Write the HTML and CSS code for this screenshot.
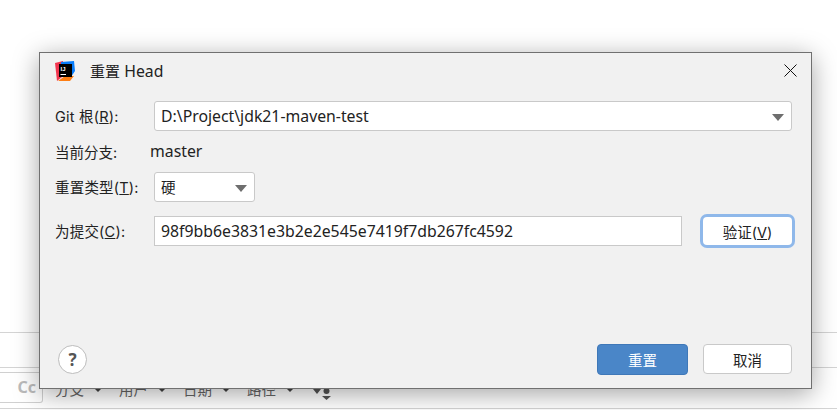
FILE: index.html
```html
<!DOCTYPE html>
<html lang="zh">
<head>
<meta charset="utf-8">
<title>重置 Head</title>
<link rel="stylesheet" href="styles.css">
</head>
<body>
<div class="page">
  <div class="top"></div>
  <div class="strip"></div>
  <div class="filters">
    <div class="search">Cc</div>
    <div class="filter">分支<i></i></div>
    <div class="filter">用户<i></i></div>
    <div class="filter">日期<i></i></div>
    <div class="filter">路径<i></i></div>
    <svg class="sort" width="18" height="20" viewBox="0 0 18 20"><path d="M0 9h8l-4 5zM3.500 0h1v9h-1z" fill="#555"/><circle cx="13.500" cy="11" r="3" fill="#555"/><path d="M9 16h9l-4.500 4z" fill="#555"/><path d="M13 0h1v9h-1z" fill="#555"/></svg>
  </div>
</div>
<div class="dialog">
  <div class="titlebar">
    <svg class="logo" width="20" height="20" viewBox="0 0 20 20">
      <path d="M0 2 8 0 7 16 2 20z" fill="#f2364f"/>
      <path d="M6 1 19 0 20 10 16 16H6z" fill="#087cfa"/>
      <path d="M10 15h9l-4 5H3z" fill="#fd7e14"/>
      <rect x="4" y="3" width="13" height="13" fill="#000"/>
      <text class="logo-text" x="5.500" y="9.500">IJ</text>
      <rect x="5.500" y="13" width="5.500" height="1" fill="#fff"/>
    </svg>
    <span class="title">重置 <span class="latin">Head</span></span>
    <svg class="close" width="13" height="13" viewBox="0 0 13 13"><path d="M.5.500l12 12M12.500.500l-12 12" stroke="#111" stroke-width="1" fill="none"/></svg>
  </div>
  <div class="form">
    <div class="row root">
      <label class="lab">Git 根(<u>R</u>):</label>
      <div class="field wide"><span class="latin">D:\Project\jdk21-maven-test</span><i class="arrow"></i></div>
    </div>
    <div class="row branch">
      <label class="lab narrow">当前分支:</label>
      <span class="val latin">master</span>
    </div>
    <div class="row kind">
      <label class="lab">重置类型(<u>T</u>):</label>
      <div class="field small"><span>硬</span><i class="arrow"></i></div>
    </div>
    <div class="row commit">
      <label class="lab">为提交(<u>C</u>):</label>
      <div class="field input"><span class="latin">98f9bb6e3831e3b2e2e545e7419f7db267fc4592</span></div>
      <button class="btn verify">验证(<u>V</u>)</button>
    </div>
  </div>
  <div class="footer">
    <button class="help">?</button>
    <div class="actions">
      <button class="btn primary">重置</button>
      <button class="btn cancel">取消</button>
    </div>
  </div>
</div>
</body>
</html>
```
FILE: styles.css
```css
* { box-sizing: border-box; }
html, body { margin: 0; height: 410px; overflow: hidden; background: #fff; }
body { font-family: Inter, "Noto Sans CJK SC", sans-serif; font-size: 14.500px; color: #222; position: relative; }
.latin { font-family: "Noto Sans", sans-serif; font-size: 15.800px; }
.page { height: 410px; display: flex; flex-direction: column; }
.top { height: 333px; border-bottom: 1px solid #d4d4d4; }
.strip { height: 35px; border-bottom: 1px solid #d4d4d4; }
.filters { height: 41px; display: flex; align-items: flex-start; border-bottom: 1px solid #d4d4d4; padding-top: 4px; }
.search { width: 43px; height: 31px; background: #fff; border: 1px solid #d0d0d0; border-left: 0; border-radius: 0 0 3px 0; font: 700 16px "Noto Sans", sans-serif; color: #bbb; text-align: right; padding: 3px 6px 0 0; margin-right: 12px; }
.filter { display: flex; align-items: center; width: 64px; height: 20px; margin-top: 6px; color: #666; }
.filter i { margin: 3px 0 0 10px; border: 4px solid transparent; border-top: 4px solid #444; border-bottom: 0; }
.sort { margin: 8px 0 0 2px; }

.dialog { position: absolute; left: 39px; top: 52px; width: 773px; height: 337px; background: #f1f1f1; border: 1px solid #707070; box-shadow: 0 5px 24px rgba(0,0,0,.36); display: flex; flex-direction: column; }
.titlebar { height: 35px; display: flex; align-items: center; padding: 0 14px 0 15px; flex: none; }
.logo { flex: none; margin-top: 1px; }
.logo-text { font: 700 6px "Liberation Sans", sans-serif; fill: #fff; }
.title { margin-left: 15px; font-size: 15px; color: #222; }
.close { margin-left: auto; }
.form { padding: 13px 19px 0 15px; }
.row { display: flex; align-items: center; }
.lab { width: 99px; flex: none; white-space: nowrap; padding-bottom: 2px; letter-spacing: .2px; }
.lab.narrow { width: 95px; letter-spacing: 0; }
.val { padding-bottom: 2px; }
.root { height: 30px; }
.branch { height: 30px; margin-top: 6px; }
.kind { height: 30px; margin-top: 5px; }
.commit { height: 30px; margin-top: 14px; }
.field { height: 30px; background: #fff; border: 1px solid #c9c9c9; border-radius: 3px; display: flex; align-items: center; padding: 0 6px; }
.field span { padding-bottom: 1px; }
.field.wide { flex: 1; }
.field.small { width: 101px; }
.field.input { width: 529px; border-radius: 0; }
.arrow { margin-left: auto; margin-right: 1px; border: 6px solid transparent; border-top: 7px solid #6e6e6e; border-bottom: 0; margin-top: 2px; }
.btn { width: 90px; height: 30px; background: #fff; border: 1px solid #c9c9c9; border-radius: 4px; font: inherit; color: #222; padding: 0; }
.verify { width: 89px; height: 28px; margin-left: 21px; border: 0; box-shadow: 0 0 0 3px #8fb8ea; }
.footer { margin-top: auto; height: 44px; padding: 0 19px 0 18px; display: flex; align-items: flex-start; justify-content: space-between; flex: none; }
.help { width: 29px; height: 29px; margin-top: 1px; border-radius: 50%; background: #fff; border: 1px solid #bdbdbd; color: #555; font: 700 17px "Noto Sans", sans-serif; padding: 0; }
.actions { display: flex; gap: 15px; margin-right: 0; }
.primary { width: 91px; height: 31px; background: #4a86c8; border-color: #3f78b8; color: #fff; }
.cancel { width: 89px; }
```
